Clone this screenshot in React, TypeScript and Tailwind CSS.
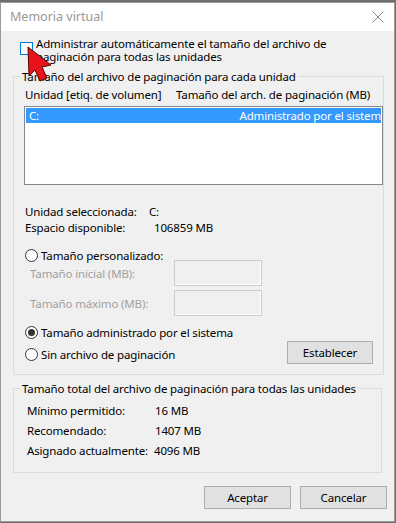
import React from "react";

function Radio({ checked }: { checked?: boolean }) {
  return (
    <span className="flex h-[13px] w-[13px] shrink-0 items-center justify-center rounded-full border border-[#333333] bg-white">
      {checked ? <span className="h-[7px] w-[7px] rounded-full bg-[#333333]" /> : null}
    </span>
  );
}

function Btn({ label, w }: { label: string; w: string }) {
  return (
    <div className={`${w} flex h-[23px] items-center justify-center border border-[#adadad] bg-[#e1e1e1] leading-[13px]`}>
      {label}
    </div>
  );
}

export default function App() {
  return (
    <div className="relative h-[523px] w-[396px] overflow-hidden whitespace-nowrap bg-[#6e6e6e] pt-[2px] font-['Noto_Sans',sans-serif] text-[11.5px] tracking-[-0.15px] text-black">
      <div className="flex h-[520px] w-[395px] flex-col border border-[#9a9a9a] bg-[#f0f0f0]">
        {/* title bar */}
        <div className="flex h-[28px] items-center justify-between bg-white pl-[9px] pr-[9px]">
          <span className="text-[12.5px] leading-[14px] tracking-normal text-[#999999]">Memoria virtual</span>
          <svg width="12" height="12" viewBox="0 0 12 12" className="mr-[1px]">
            <path d="M0.5 0.5 L11.5 11.5 M11.5 0.5 L0.5 11.5" stroke="#8a8a8a" strokeWidth="1" fill="none" />
          </svg>
        </div>

        {/* checkbox */}
        <div className="mt-[6px] flex pl-[19px]">
          <span className="mt-[5px] h-[13px] w-[13px] shrink-0 border border-[#0078d7] bg-white" />
          <span className="ml-[3px] leading-[13px]">
            Administrar automáticamente el tamaño del archivo de
            <br />
            paginación para todas las unidades
          </span>
        </div>

        {/* group 1 */}
        <fieldset className="ml-[12px] mt-[7px] h-[305px] w-[369px] border border-[#dcdcdc] px-0">
          <legend className="ml-[6px] px-[2px] leading-[13px]">
            Tamaño del archivo de paginación para cada unidad
          </legend>
          <div className="mt-[5px] flex pl-[11px] leading-[13px]">
            <span className="w-[151px] shrink-0">Unidad [etiq. de volumen]</span>
            <span>Tamaño del arch. de paginación (MB)</span>
          </div>
          <div className="ml-[10px] mt-[5px] h-[79px] w-[359px] border border-[#828790] bg-white p-[1px]">
            <div className="flex h-[15px] items-center justify-between overflow-hidden bg-[#3399ff] pl-[3px] leading-[13px] text-white">
              <span>C:</span>
              <span>Administrado por el sistem</span>
            </div>
          </div>

          <div className="mt-[19px] pl-[11px] leading-[16px]">
            <div className="flex">
              <span className="w-[124px] shrink-0">Unidad seleccionada:</span>
              <span>C:</span>
            </div>
            <div className="flex">
              <span className="w-[129px] shrink-0">Espacio disponible:</span>
              <span>106859 MB</span>
            </div>
          </div>

          <div className="mt-[13px] flex h-[13px] items-center gap-[3px] pl-[11px] leading-[13px]">
            <Radio />
            <span>Tamaño personalizado:</span>
          </div>

          <div className="mt-[-2px] flex items-center pl-[16px] text-[#a0a0a0]">
            <span className="w-[144px] shrink-0 leading-[13px]">Tamaño inicial (MB):</span>
            <span className="h-[26px] w-[88px] border border-[#cccccc] bg-[#f0f0f0] shadow-[inset_-1px_-1px_0_#ffffff]" />
          </div>
          <div className="mt-[4px] flex items-center pl-[16px] text-[#a0a0a0]">
            <span className="w-[144px] shrink-0 leading-[13px]">Tamaño máximo (MB):</span>
            <span className="h-[26px] w-[88px] border border-[#cccccc] bg-[#f0f0f0] shadow-[inset_-1px_-1px_0_#ffffff]" />
          </div>

          <div className="mt-[10px] flex h-[13px] items-center gap-[3px] pl-[11px] leading-[13px]">
            <Radio checked />
            <span>Tamaño administrado por el sistema</span>
          </div>

          <div className="mt-[2px] flex items-center justify-between pl-[11px] pr-[10px]">
            <div className="flex items-center gap-[3px] pt-[3px] leading-[13px]">
              <Radio />
              <span>Sin archivo de paginación</span>
            </div>
            <Btn label="Establecer" w="w-[86px]" />
          </div>
        </fieldset>

        {/* group 2 */}
        <fieldset className="ml-[12px] mt-[7px] h-[91px] w-[369px] border border-[#dcdcdc] px-0">
          <legend className="ml-[6px] px-[2px] leading-[13px]">
            Tamaño total del archivo de paginación para todas las unidades
          </legend>
          <div className="mt-[6px] pl-[13px] leading-[20px]">
            <div className="flex">
              <span className="w-[128px] shrink-0">Mínimo permitido:</span>
              <span>16 MB</span>
            </div>
            <div className="flex">
              <span className="w-[128px] shrink-0">Recomendado:</span>
              <span>1407 MB</span>
            </div>
            <div className="flex">
              <span className="w-[127px] shrink-0">Asignado actualmente:</span>
              <span>4096 MB</span>
            </div>
          </div>
        </fieldset>

        <div className="mt-[13px] flex justify-end gap-[9px] pr-[7px]">
          <Btn label="Aceptar" w="w-[87px]" />
          <Btn label="Cancelar" w="w-[87px]" />
        </div>
      </div>

      {/* mouse pointer overlay */}
      <svg className="absolute left-[22px] top-[44px]" width="34" height="40" viewBox="0 0 34 40">
        <polygon
          points="6,3 7,32 13,26 18,37 25,34 20,23 29,21"
          fill="#e8141c"
          stroke="#5a0000"
          strokeWidth="1"
          strokeLinejoin="round"
        />
      </svg>
    </div>
  );
}
